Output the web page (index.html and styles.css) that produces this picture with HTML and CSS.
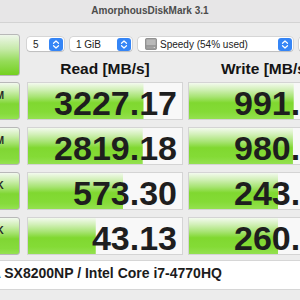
FILE: index.html
```html
<!DOCTYPE html>
<html lang="en">
<head>
    <meta charset="UTF-8">
    <meta name="viewport" content="width=device-width, initial-scale=1.0">
    <title>AmorphousDiskMark</title>
    <link rel="stylesheet" href="styles.css">
</head>
<body>

    <!-- window title -->
    <div class="titlebar">AmorphousDiskMark 3.1</div>

    <div class="window">
        <div class="top">
            <button class="run run-all">All</button>
            <div class="controls">
                <div class="selects">
                    <div class="popup popup-count">
                        <span>5</span>
                        <svg class="stepper" width="14" height="13" viewBox="0 0 14 13"><rect width="14" height="13" rx="3" fill="#3585f6"/><path d="M4.5 5.3 L7 3 L9.5 5.3 M4.5 7.7 L7 10 L9.5 7.7" stroke="#fff" stroke-width="1.2" fill="none" stroke-linecap="round" stroke-linejoin="round"/></svg>
                    </div>
                    <div class="popup popup-size">
                        <span>1 GiB</span>
                        <svg class="stepper" width="14" height="13" viewBox="0 0 14 13"><rect width="14" height="13" rx="3" fill="#3585f6"/><path d="M4.5 5.3 L7 3 L9.5 5.3 M4.5 7.7 L7 10 L9.5 7.7" stroke="#fff" stroke-width="1.2" fill="none" stroke-linecap="round" stroke-linejoin="round"/></svg>
                    </div>
                    <div class="popup popup-disk">
                        <svg class="disk" width="12" height="12" viewBox="0 0 12 12"><rect x="0.5" y="0.5" width="11" height="11" rx="1" fill="#8d8d8d" stroke="#6f6f6f" stroke-width="0.6"/><rect x="1.3" y="1.3" width="9.4" height="6" fill="#b9b9b9"/><rect x="1.3" y="8.3" width="9.4" height="2.4" fill="#a2a2a2"/><circle cx="9.3" cy="9.5" r="0.6" fill="#e8e8e8"/></svg>
                        <span>Speedy (54% used)</span>
                        <svg class="stepper" width="14" height="13" viewBox="0 0 14 13"><rect width="14" height="13" rx="3" fill="#3585f6"/><path d="M4.5 5.3 L7 3 L9.5 5.3 M4.5 7.7 L7 10 L9.5 7.7" stroke="#fff" stroke-width="1.2" fill="none" stroke-linecap="round" stroke-linejoin="round"/></svg>
                    </div>
                    <div class="popup popup-unit"><span>MB/s</span></div>
                </div>
                <div class="heads">
                    <div>Read [MB/s]</div>
                    <div>Write [MB/s]</div>
                </div>
            </div>
        </div>

        <div class="row">
            <button class="run">SEQ1M<br>QD8</button>
            <div class="result" style="background-size: 75% 100%">3227.17</div>
            <div class="result" style="background-size: 68% 100%">991.46</div>
        </div>
        <div class="row">
            <button class="run">SEQ1M<br>QD1</button>
            <div class="result" style="background-size: 74.5% 100%">2819.18</div>
            <div class="result" style="background-size: 67.5% 100%">980.23</div>
        </div>
        <div class="row">
            <button class="run">RND4K<br>QD64</button>
            <div class="result" style="background-size: 62% 100%">573.30</div>
            <div class="result" style="background-size: 58% 100%">243.71</div>
        </div>
        <div class="row">
            <button class="run">RND4K<br>QD1</button>
            <div class="result" style="background-size: 44% 100%">43.13</div>
            <div class="result" style="background-size: 58% 100%">260.15</div>
        </div>

        <div class="comment">ADATA SX8200NP / Intel Core i7-4770HQ</div>
    </div>

</body>
</html>
```

FILE: styles.css
```css
/* page is a cropped window, so hide what spills over */
body {
    margin: 0;
    width: 300px;
    height: 300px;
    overflow: hidden;
    background-color: #ececec;
    font-family: "Liberation Sans", Arial, sans-serif;
}

.titlebar {
    height: 23px;
    box-sizing: border-box;
    line-height: 22px;
    text-align: center;
    font-size: 10px;
    font-weight: bold;
    color: #4c4c4c;
    background-color: #e7e6e7;
    border-bottom: 1px solid #d3d3d3;
}

.window {
    display: flex;
    flex-direction: column;
    gap: 7px;
    width: 420px;
    margin-left: -52px; /* left part of the window is cut off */
    padding-top: 11px;
}

.top {
    display: flex;
    gap: 5px;
    margin-bottom: -4px;
}

/* green run buttons on the left */
.run {
    flex: none;
    width: 72px;
    margin: 0 2px 0 0;
    padding: 0 0 0 5px;
    box-sizing: border-box;
    border: 1px solid #b8b8b8;
    border-radius: 3px;
    background: linear-gradient(to bottom, #f2f9ee 0%, #cdeeb0 22%, #a4e26e 42%, #80d634 58%, #86db3c 85%, #95e252 100%);
    font-family: "Liberation Sans", Arial, sans-serif;
    font-size: 10px;
    font-weight: bold;
    line-height: 11px;
    color: #262626;
    text-align: center;
}

.run-all {
    height: 42px;
    background: linear-gradient(to bottom, #eef6ea 0%, #c6eaa8 35%, #96dc5a 65%, #74d020 100%);
}

.controls {
    display: flex;
    flex-direction: column;
    width: 317px;
}

.selects {
    display: flex;
    gap: 6px;
    margin-top: 3px;
    height: 14px;
}

.popup {
    display: flex;
    align-items: center;
    flex: none;
    box-sizing: border-box;
    height: 14px;
    padding: 0 1px 0 6px;
    background-color: #fff;
    border-radius: 3px;
    box-shadow: 0 0 0 0.5px rgba(0, 0, 0, 0.18), 0 1px 1px rgba(0, 0, 0, 0.12);
    font-size: 10px;
    color: #222;
}

.popup span {
    flex: 1;
    white-space: nowrap;
}

.popup-count { width: 37px; }
.popup-size { width: 62px; }
.popup-disk { width: 155px; padding-left: 7px; }
.popup-unit { width: 60px; }

.stepper {
    flex: none;
}

.disk {
    flex: none;
    margin-right: 3px;
}

.heads {
    display: grid;
    grid-template-columns: 156px 156px;
    gap: 5px;
    margin-top: 8px;
    line-height: 20px;
    font-size: 15.5px;
    font-weight: bold;
    text-align: center;
    color: #141414;
}

.row {
    display: flex;
    gap: 5px;
    height: 38px;
}

.result {
    flex: none;
    width: 156px;
    height: 38px;
    box-sizing: border-box;
    padding: 4px 5px 0 0;
    border: 1px solid #d4d4d4;
    background: linear-gradient(to bottom, #f3faee 0%, #d2f0b8 18%, #a8e474 38%, #80d830 55%, #84db36 80%, #94e150 100%) no-repeat, #f8f8f8;
    font-size: 34px;
    font-weight: bold;
    line-height: 32px;
    text-align: right;
    color: #1e1e1e;
    white-space: nowrap;
}

.comment {
    height: 30px;
    box-sizing: border-box;
    margin-top: -2px;
    padding-left: 6px;
    background-color: #fff;
    border-top: 1px solid #d6d6d6;
    border-bottom: 1px solid #d6d6d6;
    font-size: 14px;
    font-weight: bold;
    line-height: 24px;
    color: #1c1c1c;
    white-space: nowrap;
}
```
